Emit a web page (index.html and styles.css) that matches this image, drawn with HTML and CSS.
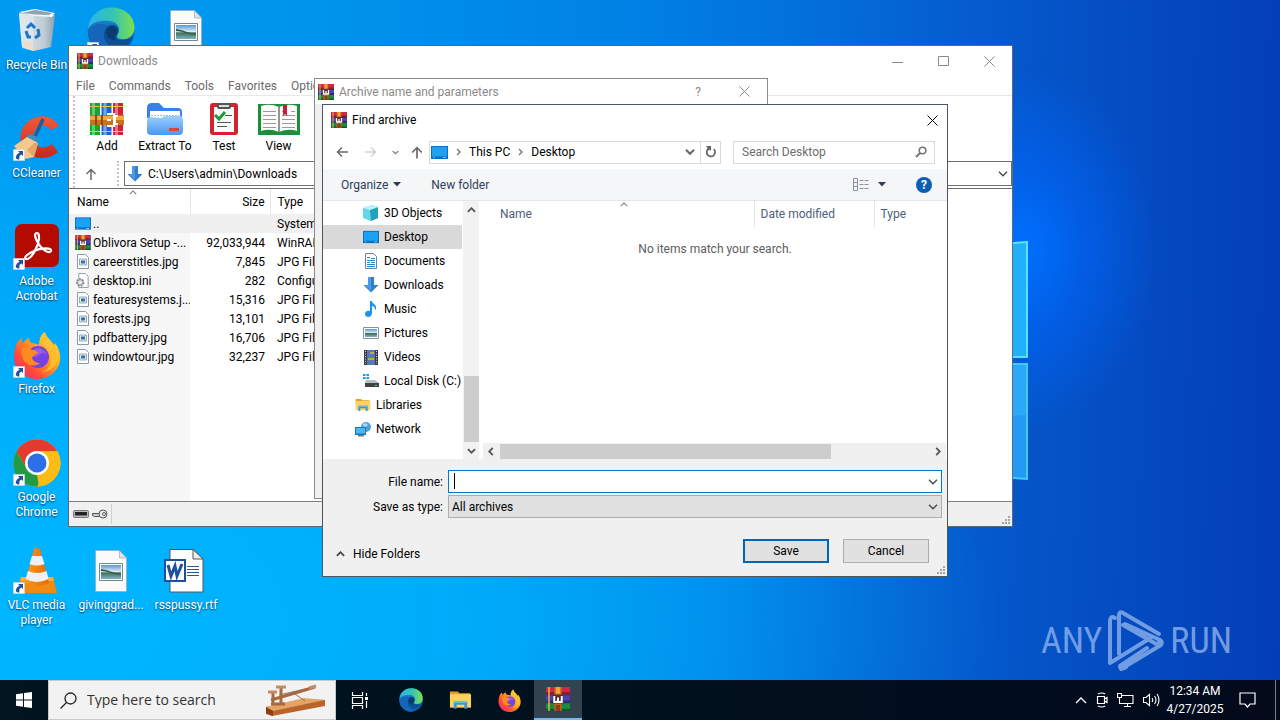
FILE: index.html
```html
<!DOCTYPE html>
<html lang="en">
<head>
<meta charset="utf-8">
<title>Desktop</title>
<link rel="stylesheet" href="styles.css">
</head>
<body>
<svg class="sprite" aria-hidden="true">
  <defs>
    <linearGradient id="g-edge" x1="0" y1="0" x2="1" y2="0"><stop offset="0" stop-color="#2bb4ee"/><stop offset=".55" stop-color="#35c5b0"/><stop offset="1" stop-color="#7ee04c"/></linearGradient>
    <linearGradient id="g-edge2" x1="0" y1="0" x2="0" y2="1"><stop offset="0" stop-color="#1b8edb"/><stop offset="1" stop-color="#0f57a8"/></linearGradient>
    <linearGradient id="g-fox" x1="1" y1="0" x2="0" y2="1"><stop offset="0" stop-color="#ffe940"/><stop offset=".4" stop-color="#ffa420"/><stop offset=".7" stop-color="#ff4b3a"/><stop offset="1" stop-color="#e4237f"/></linearGradient>
    <linearGradient id="g-folder" x1="0" y1="0" x2="0" y2="1"><stop offset="0" stop-color="#9ccfff"/><stop offset="1" stop-color="#4a96f0"/></linearGradient>
    <linearGradient id="g-cone" x1="0" y1="0" x2="1" y2="0"><stop offset="0" stop-color="#ff9a1e"/><stop offset="1" stop-color="#e56a00"/></linearGradient>
    <linearGradient id="g-bin" x1="0" y1="0" x2="1" y2="0"><stop offset="0" stop-color="#dde5eb"/><stop offset=".7" stop-color="#bfccd6"/><stop offset="1" stop-color="#8b9fae"/></linearGradient>
    <linearGradient id="g-cc" x1="0" y1="0" x2="0" y2="1"><stop offset="0" stop-color="#ef5a3c"/><stop offset="1" stop-color="#c9271c"/></linearGradient>
    <linearGradient id="g-photo" x1="0" y1="0" x2="0" y2="1"><stop offset="0" stop-color="#5c97d6"/><stop offset=".5" stop-color="#e3eff6"/><stop offset=".55" stop-color="#3f6f58"/><stop offset="1" stop-color="#7fb3c4"/></linearGradient>

    <symbol id="rar" viewBox="0 0 16 16">
      <path fill="#2a2438" d="M0 0h16v16H0z"/>
      <path fill="#cc2a48" d="M0 0h16v5H0z"/><path fill="#4a43b4" d="M0 5.500h16v4.700H0z"/><path fill="#168c40" d="M0 10.800h16V16H0z"/>
      <path fill="#8c1830" d="M0 3.500h16V5H0z"/><path fill="#302a80" d="M0 9h16v1.200H0z"/><path fill="#0c5c28" d="M0 14.500h16V16H0z"/>
      <path fill="#e9b34a" d="M1.500 0h1v16h-1z"/>
      <path fill="#c2621f" d="M5.500 0h5v16h-5z"/><path fill="#f1a33a" d="M6.500 0h3v4.500h-3z"/>
      <path fill="#8d3c18" d="M6.500 12h3v4h-3z"/><path fill="#5d3030" d="M4.500 5h7v6h-7z"/>
      <path fill="none" stroke="#fff" stroke-width="1.300" d="M5.500 6v4h5V6M8 7v3"/>
    </symbol>
    <symbol id="shot" viewBox="0 0 12 12"><path fill="#fff" stroke="#b9c4cc" stroke-width=".6" d="M.3.3h11.400v11.400H.3z"/><path fill="#24519b" d="M5 2h5v5L8.400 5.600C6.600 6.500 6 8 6.400 10.200 4.500 10.800 3 10 2.700 8.600 3 6 4.500 4.500 6.600 3.700z"/></symbol>
    <symbol id="edge" viewBox="0 0 48 48">
      <circle cx="24" cy="24" r="23.500" fill="url(#g-edge2)"/>
      <path fill="url(#g-edge)" d="M1 22C2 9 12 .5 25 .5 38 .5 48 10 47.500 21c-.3 8-7 12-13.500 11-4-.6-5-2.500-3-5 3-5 0-12-8-13C13 13 4 15 1 22z"/>
      <path fill="#0c4f93" d="M17 25c2-7 8-9 12-6 3 2 3 6 1 9-2 3 0 5 5 5 5 0 8-1 11-3-3 9-13 14-21 10-6-3-9-9-8-15z"/>
      <path fill="#1565b8" d="M17 25c-2 10 4 18 14 20-4 2-10 3-15 1C7 42 2 34 1 25c3-8 15-10 20-6-2 1-3 3-4 6z"/>
      <path fill="#093b70" d="M19 24c2-5 6-6 9-4 3 2 3 5 1 8-2 3-1 5 1 6-6-1-11-4-11-10z"/>
    </symbol>
    <symbol id="fox" viewBox="0 0 48 48">
      <path fill="url(#g-fox)" d="M4 12c1-2 3-4 5-5-1 3 0 4 1 5 2-3 4-4 6-5 0 3 1 4 3 5 2 0 5 1 7 2C26 8 28 4 32 1c2 7 7 9 9 14l1-3c4 5 6 12 5 18-2 11-12 18-23 18C11 48 1 38 1 26c0-5 1-10 3-14z"/>
      <path fill="#ffc22c" d="M31 1c-4 4-5 8-2 12 6 5 11 9 9 18-1 5-5 9-10 10 9 0 16-6 17-14 1-8-3-12-6-16-3-4-6-5-8-10z" opacity=".8"/>
      <circle cx="25" cy="26" r="11" fill="#7543e3"/><path fill="#9d59ea" d="M18 20c5-5 13-3 16 3-4-2-6-1-8 1-3 3-7 2-9 0z"/>
      <path fill="#ff8a1d" d="M9 17c4-1 8 0 10 2 3 0 5 1 6 3-3 2-5 2-6 5 1 3 4 5 8 5-6 5-14 2-17-4-1-4-2-7-1-11z"/>
    </symbol>
    <symbol id="arrowdown" viewBox="0 0 16 16"><path fill="#2f7fd0" d="M5 0h6v8h4.500L8 15.500.5 8H5z"/><path fill="#4b9be6" d="M5 0h3v14L1.500 8H5z"/></symbol>
    <symbol id="monitor" viewBox="0 0 17 13"><path fill="#0b6fbf" d="M0 0h17v13H0z"/><path fill="#1ba1f6" d="M1 1h15v9.500H1z"/><path fill="#9fd8ff" d="M2 11.300h1.500v.8H2zM12 11.300h3v.8h-3z"/></symbol>
    <symbol id="jpg" viewBox="0 0 12 15"><path fill="#fff" stroke="#8b9aa8" d="M.5.5h8l3 3v11H.5z"/><path fill="#dfeaf3" stroke="#7d97b2" stroke-width=".8" d="M2.500 5h7v6h-7z"/><path fill="#3c6d9c" d="M4 6.500h4v3H4z"/></symbol>
    <symbol id="photo" viewBox="0 0 32 42"><path fill="#fbfbfb" stroke="#9aa7b0" stroke-width=".7" d="M.5.500h24l7 7.500v33.500H.5z"/><path fill="#dce4ea" stroke="#9aa7b0" stroke-width=".7" d="M24.500.5V8h7z"/><path fill="#fff" stroke="#73879b" d="M4.500 13.500h23v17h-23z"/><path fill="url(#g-photo)" d="M6 15h20v14H6z"/><path fill="#2f5c44" d="M6 21c6 0 10 3 20 4v-1c-8-1-13-4-20-5z"/></symbol>
    <symbol id="explorer" viewBox="0 0 24 20"><path fill="#e8a020" d="M1 1h8l2 2h11v5H1z"/><path fill="#fbd364" d="M1 4h22v14H1z"/><path fill="#3f94d4" d="M5 11h14v8h-3v-4H8v4H5z"/><path fill="#72b8e8" d="M5 11h14v2H5z"/></symbol>
    <symbol id="x" viewBox="0 0 11 11"><path fill="none" stroke="currentColor" d="M.5.500l10 10M10.500.5l-10 10"/></symbol>
    <symbol id="chev" viewBox="0 0 10 6"><path fill="none" stroke="currentColor" stroke-width="1.300" d="M1 .8l4 4 4-4"/></symbol>
    <symbol id="chevb" viewBox="0 0 10 6"><path fill="none" stroke="currentColor" stroke-width="2" d="M1 .8l4 4 4-4"/></symbol>
    <symbol id="grip" viewBox="0 0 8 8"><path fill="#a5a5a5" d="M6 0h2v2H6zM3 3h2v2H3zM6 3h2v2H6zM0 6h2v2H0zM3 6h2v2H3zM6 6h2v2H6z"/></symbol>
  </defs>
</svg>

<main class="desktop">
  <svg class="wall" viewBox="0 0 60 240" aria-hidden="true">
    <path fill="#22b0f8" stroke="#55e4ff" stroke-width="2" d="M0 5l57-4v115H0z"/>
    <path fill="#2399f8" stroke="#3fcbff" stroke-width="2" d="M0 123h57v115l-57-4z"/>
    <path fill="#35b8fb" opacity=".5" d="M0 124h56v50l-56 4z"/>
  </svg>

  <div class="icons">
    <a class="shortcut" href="#"><svg class="pic" viewBox="0 0 48 48"><path fill="url(#g-bin)" d="M6 6l36 2-4 32-17 4-12-4z"/><path fill="#f4f7f9" d="M6 5l16-3 20 4-3 4-18-1z"/><path fill="#8fa2b0" d="M9 6l13-3 17 3-3 2-14-.5z"/><path fill="#e3eaef" opacity=".7" d="M21 9l-1 35-11-3L6 7z"/><path fill="#f3d9c0" opacity=".7" d="M10 33l10 3v8l-9-4z"/><path fill="none" stroke="#1a76c9" stroke-width="3" d="M14 21l4-4 4 4M13 24l2 6h3M25 22l1 6-4 3"/></svg><span>Recycle Bin</span></a>
    <a class="shortcut" href="#"><svg class="pic" viewBox="0 0 48 48"><path fill="url(#g-cc)" d="M46 11C40 1 28-1 19 4 7 10 4 25 12 36c8 9 24 9 33 1l-6-8c-5 4-11 5-15 1-5-5-5-13 0-17 4-4 10-3 14 2z"/><path stroke="#1d5d99" stroke-width="3.500" d="M30 4L21 24"/><path fill="#3d8ec9" d="M16 19l9 3-2 9-13-5z"/><path fill="#f3c98e" d="M1 31l13-9 11 6-4 14-9 2z"/><path fill="#e0a765" d="M14 35l7-7 4 0-4 14z"/><use href="#shot" y="34" width="12" height="12"/></svg><span>CCleaner</span></a>
    <a class="shortcut" href="#"><svg class="pic" viewBox="0 0 48 48"><rect x="2" y="1" width="44" height="43" rx="7" fill="#b30b00"/><path fill="none" stroke="#fff" stroke-width="2.200" d="M24 10c-4 0-1 8 3 13 4 5 10 8 11 5 1-4-11-3-17 0-7 3-11 7-8 8 5 1 12-12 13-20 0-4 0-6-2-6z"/><use href="#shot" y="35" width="12" height="12"/></svg><span>Adobe Acrobat</span></a>
    <a class="shortcut" href="#"><svg class="pic" viewBox="0 0 48 48"><use href="#fox"/><use href="#shot" y="35" width="12" height="12"/></svg><span>Firefox</span></a>
    <a class="shortcut" href="#"><svg class="pic" viewBox="0 0 48 48"><circle cx="24" cy="24" r="23.500" fill="#fbbc15"/><path fill="#e53a2e" d="M3.600 12.200A23.500 23.500 0 0144.400 12.300H24L13.800 30z"/><path fill="#259a45" d="M3.600 12.200L14 30l10 6 2 11.500A23.500 23.500 0 013.600 12.200z"/><path fill="#fbbc15" d="M24 12.200h20.400A23.500 23.500 0 0124 47.500L34.200 30z"/><circle cx="24" cy="24" r="12" fill="#fff"/><circle cx="24" cy="24" r="9.500" fill="#2d6fe6"/><use href="#shot" y="35" width="12" height="12"/></svg><span>Google Chrome</span></a>
    <a class="shortcut" href="#"><svg class="pic" viewBox="0 0 48 48"><path fill="#f08a12" d="M8 30h32l4 16H4z"/><path fill="#ffab3d" d="M8 30h32l1 4H7z"/><path fill="url(#g-cone)" d="M21 2q3-2 6 0l9 34q-12 6-24 0z"/><path fill="#eef0f2" d="M19 9h10l2.500 8q-7 3-15 0zM15 24q9 4 18.500 0l2 8q-12 6-23 0z"/><use href="#shot" y="35" width="12" height="12"/></svg><span>VLC media player</span></a>
    <a class="shortcut top2" href="#" aria-label="Edge"><svg class="pic" viewBox="0 0 48 48"><use href="#edge"/><use href="#shot" y="35" width="12" height="12"/></svg></a>
    <a class="shortcut bottom2" href="#"><svg class="pic" viewBox="0 0 48 48"><use href="#photo" x="8" y="3" width="32" height="42"/></svg><span>givinggrad...</span></a>
    <a class="shortcut top3" href="#" aria-label="Picture"><svg class="pic" viewBox="0 0 48 48"><use href="#photo" x="8" y="3" width="32" height="42"/></svg></a>
    <a class="shortcut bottom3" href="#"><svg class="pic" viewBox="0 0 48 48"><path fill="#fff" stroke="#555" d="M8 2.500h23L41 12v33H8z"/><path fill="#eee" stroke="#555" d="M31 2.500V12h10z"/><path stroke="#2b579a" d="M25 19.500h12M25 22.500h12M25 25.500h12M25 28.500h12"/><path fill="#fff" stroke="#1f4f9e" stroke-width="2" d="M3 13h20v21H3z"/><path fill="none" stroke="#1f4f9e" stroke-width="3" d="M6 18l3 11 4-10 2 10 5-12"/></svg><span>rsspussy.rtf</span></a>
  </div>

  <section class="win main-win">
    <header class="titlebar dim"><svg class="app"><use href="#rar"/></svg><h1>Downloads</h1>
      <div class="caption">
        <button aria-label="Minimize"><svg width="11" height="11"><path stroke="currentColor" d="M0 6.500h11"/></svg></button>
        <button aria-label="Maximize"><svg width="11" height="11"><path fill="none" stroke="currentColor" d="M.5.5h10v9H.5z"/></svg></button>
        <button aria-label="Close"><svg width="11" height="11"><use href="#x"/></svg></button>
      </div>
    </header>
    <nav class="menu"><button>File</button><button>Commands</button><button>Tools</button><button>Favorites</button><button>Options</button></nav>
    <div class="tools">
      <button class="t-add"><svg width="34" height="34" viewBox="0 0 34 34"><path fill="#19a335" d="M0 1h10v32H0z"/><path fill="#5bd070" d="M2 1h3v32H2z"/><path fill="#2462c9" d="M11.500 1h10v32h-10z"/><path fill="#6ea6f4" d="M13.500 1h3v32h-3z"/><path fill="#d21f3d" d="M23 1h10v32H23z"/><path fill="#f4708a" d="M25 1h3v32h-3z"/><path fill="#ecc53c" d="M0 4h10v1H0zM11.500 4h10v1h-10zM23 4h10v1H23zM0 29h10v1H0zM11.500 29h10v1h-10zM23 29h10v1H23z"/><path fill="#c7731c" d="M0 13h34v10H0z"/><path fill="#f0a93b" d="M0 14h34v4H0z"/><path fill="#8d4a14" d="M5 13h2v10H5zM11 13h2v10h-2z"/><path fill="none" stroke="#fff" stroke-width="2" d="M17 12h7v12h-7M17 18h4M28 14h-3v8h3"/></svg>Add</button>
      <button class="t-ext"><svg width="36" height="34" viewBox="0 0 36 34"><path fill="#3a7fea" d="M0 6q0-5 5-5h7l5 5h14q4 0 4 4v6H0z"/><path fill="#fff" d="M3 9h30v12H3z"/><path stroke="#a9b8c8" stroke-dasharray="2 1" d="M4 13.500h28"/><path fill="url(#g-folder)" d="M0 19q0-4 4-4l10 1 4-2h14q4 0 4 4v11q0 4-4 4H4q-4 0-4-4z"/><path fill="#e2452f" d="M22 26h10v3H22z"/></svg>Extract To</button>
      <button class="t-test"><svg width="28" height="34" viewBox="0 0 28 34"><rect y="1" width="28" height="32" rx="3" fill="#d2232f"/><path fill="#fafafa" d="M4 5h20v25H4z"/><rect x="7" y="1" width="14" height="6" rx="2" fill="#555"/><path fill="#ddd" d="M9 3h10v2H9z"/><path stroke="#555" d="M15 13.500h7M7 20.500h14M7 24.500h10"/><path fill="none" stroke="#1c9a3d" stroke-width="3" d="M5 13l4 4 6-7"/></svg>Test</button>
      <button class="t-view"><svg width="42" height="34" viewBox="0 0 42 34"><path fill="#1b8f3a" d="M0 2h42v31H0z"/><path fill="#fbfbfb" d="M3 4q9-3 18 1 9-4 18-1v25q-9-3-18 1-9-4-18-1z"/><path stroke="#333" d="M21 5v25"/><path stroke="#9a9a9a" d="M5 9.500h13M5 13.500h13M5 17.500h13M5 21.500h13M24 13.500h13M24 17.500h13M24 21.500h13M24 9.500h4M33 9.500h4M5 25.500h13M24 25.500h13"/><path fill="#c51f35" d="M25 3h4v11l-2-2-2 2z"/></svg>View</button>
    </div>
    <div class="address">
      <button class="up" aria-label="Up"><svg width="12" height="12" viewBox="0 0 12 12"><path fill="none" stroke="#6a6a6a" stroke-width="1.500" d="M6 12V2M1.500 6L6 1.500 10.500 6"/></svg></button>
      <div class="path"><svg width="16" height="16"><use href="#arrowdown"/></svg><input type="text" aria-label="Path" value="C:\Users\admin\Downloads"><svg class="c" width="10" height="6"><use href="#chev"/></svg></div>
    </div>
    <div class="list">
      <table class="files">
        <thead><tr><th class="n">Name<svg class="sort" width="8" height="5" viewBox="0 0 10 6"><path fill="none" stroke="#777" stroke-width="1.300" d="M1 5l4-4 4 4"/></svg></th><th class="s">Size</th><th class="t">Type</th></tr></thead>
        <tbody>
          <tr class="sel"><td class="n"><svg class="fi"><use href="#monitor"/></svg>..</td><td class="s"></td><td class="t">System Folder</td></tr>
          <tr><td class="n"><svg class="fi"><use href="#rar"/></svg>Oblivora Setup -...</td><td class="s">92,033,944</td><td class="t">WinRAR archive</td></tr>
          <tr><td class="n"><svg class="fi"><use href="#jpg"/></svg>careerstitles.jpg</td><td class="s">7,845</td><td class="t">JPG File</td></tr>
          <tr><td class="n"><svg class="fi" viewBox="0 0 16 16"><path fill="#fff" stroke="#8b9aa8" d="M3.500.5h7l3 3v12h-10z"/><circle cx="5" cy="10" r="3.500" fill="#ccc" stroke="#888" stroke-width="2" stroke-dasharray="2 1"/><circle cx="5" cy="10" r="1.300" fill="#fff"/></svg>desktop.ini</td><td class="s">282</td><td class="t">Configuration</td></tr>
          <tr><td class="n"><svg class="fi"><use href="#jpg"/></svg>featuresystems.j...</td><td class="s">15,316</td><td class="t">JPG File</td></tr>
          <tr><td class="n"><svg class="fi"><use href="#jpg"/></svg>forests.jpg</td><td class="s">13,101</td><td class="t">JPG File</td></tr>
          <tr><td class="n"><svg class="fi"><use href="#jpg"/></svg>pdfbattery.jpg</td><td class="s">16,706</td><td class="t">JPG File</td></tr>
          <tr><td class="n"><svg class="fi"><use href="#jpg"/></svg>windowtour.jpg</td><td class="s">32,237</td><td class="t">JPG File</td></tr>
        </tbody>
      </table>
    </div>
    <footer class="status"><svg width="36" height="12" viewBox="0 0 36 12"><rect x=".5" y="2.500" width="15" height="7" rx="1" fill="#bbb" stroke="#777"/><path fill="#222" d="M2 4h12v3.500H2z"/><path fill="#ccc" stroke="#555" d="M19.500 5.500h7v3h-5l-2-1z"/><circle cx="30" cy="6" r="4" fill="#eee" stroke="#555"/><circle cx="31" cy="6" r="1.500" fill="#fff" stroke="#555"/></svg><i class="sep"></i><svg class="grip"><use href="#grip"/></svg></footer>
  </section>

  <section class="win params">
    <header class="titlebar dim"><svg class="app"><use href="#rar"/></svg><h1>Archive name and parameters</h1>
      <div class="caption"><button aria-label="Help">?</button><button aria-label="Close"><svg width="11" height="11"><use href="#x"/></svg></button></div>
    </header>
  </section>

  <section class="win find">
    <header class="titlebar"><svg class="app"><use href="#rar"/></svg><h1>Find archive</h1>
      <div class="caption"><button aria-label="Close"><svg width="11" height="11"><use href="#x"/></svg></button></div>
    </header>
    <div class="nav">
      <button class="b1" aria-label="Back"><svg width="12" height="12" viewBox="0 0 12 12"><path fill="none" stroke="#6a6a6a" stroke-width="1.500" d="M12 6H1.500M6 1.500L1.500 6 6 10.500"/></svg></button>
      <button class="b1" aria-label="Forward"><svg width="12" height="12" viewBox="0 0 12 12"><path fill="none" stroke="#d2d2d2" stroke-width="1.500" d="M0 6h10.500M6 1.500L10.500 6 6 10.500"/></svg></button>
      <button class="b2" aria-label="Recent"><svg width="7" height="5" viewBox="0 0 10 6"><use href="#chevb"/></svg></button>
      <button class="b2" aria-label="Up"><svg width="12" height="13" viewBox="0 0 12 12"><path fill="none" stroke="#6a6a6a" stroke-width="1.700" d="M6 12V2M1.200 6L6 1.200 10.800 6"/></svg></button>
      <div class="crumbs"><svg width="17" height="13"><use href="#monitor"/></svg><svg class="r" width="5" height="8" viewBox="0 0 5 8"><path fill="none" stroke="#777" stroke-width="1.400" d="M1 1l3 3-3 3"/></svg><button>This PC</button><svg class="r" width="5" height="8" viewBox="0 0 5 8"><path fill="none" stroke="#777" stroke-width="1.400" d="M1 1l3 3-3 3"/></svg><button>Desktop</button>
        <button class="drop" aria-label="Previous locations"><svg width="10" height="6"><use href="#chevb"/></svg></button>
        <button class="refresh" aria-label="Refresh"><svg width="12" height="12" viewBox="0 0 12 12"><path fill="none" stroke="#666" stroke-width="1.700" d="M3.500 2.800A4.200 4.200 0 108.800 3.200"/><path fill="#666" d="M1 0h5v5L4.600 3.700 2.500 5V2z"/></svg></button></div>
      <div class="search"><input type="text" aria-label="Search Desktop" placeholder="Search Desktop"><svg width="12" height="12" viewBox="0 0 12 12"><circle cx="7.500" cy="4.500" r="3.300" fill="none" stroke="#777" stroke-width="1.600"/><path stroke="#777" stroke-width="2" d="M5 7L1 11"/></svg></div>
    </div>
    <div class="bar"><button>Organize<svg width="8" height="5"><path fill="currentColor" d="M0 0h8L4 4.500z"/></svg></button><button>New folder</button>
      <button class="views" aria-label="Views"><svg width="16" height="13" viewBox="0 0 16 13"><path fill="none" stroke="#8592a3" d="M.5.5h4v12h-4zM.5 4.500h4M.5 8.500h4M6.500 2.500h4M11.500 2.500h4M6.500 6.500h4M11.500 6.500h4M6.500 10.500h4M11.500 10.500h4"/></svg><svg width="8" height="5"><path fill="currentColor" d="M0 0h8L4 4.500z"/></svg></button>
      <button class="help" aria-label="Help">?</button></div>
    <div class="panes">
      <ul class="tree">
        <li><svg viewBox="0 0 16 16"><path fill="#63d6e8" d="M0 3l9-3 6 2v11l-7 3-8-3z"/><path fill="#22a2bd" d="M7 5l8-3v11l-7 3z"/><path fill="#baf3f7" d="M0 3l9-3 6 2-8 3z"/></svg>3D Objects</li>
        <li class="on"><svg><use href="#monitor"/></svg>Desktop</li>
        <li><svg viewBox="0 0 16 16"><path fill="#fff" stroke="#77828d" d="M2.500.5h8l3 3v12h-11z"/><path stroke="#2b86c8" d="M4 4.500h3M8 5.500h4M4 7.500h8M4 9.500h3M8 9.500h4M4 11.500h8M4 13.500h8"/></svg>Documents</li>
        <li><svg><use href="#arrowdown"/></svg>Downloads</li>
        <li><svg viewBox="0 0 16 16"><path fill="#1d94e6" d="M7 0h2c0 3 5 3 4 8l-1 1c0-3-1-3.500-3-4v7c0 5-7 5-7 1 0-3 3-4 5-3z"/></svg>Music</li>
        <li><svg viewBox="0 0 16 16"><path fill="#fff" stroke="#8593a0" d="M.5 2.500h15v11H.5z"/><path fill="url(#g-photo)" d="M2 4h12v8H2z"/></svg>Pictures</li>
        <li><svg viewBox="0 0 16 16"><path fill="#3b3b3b" d="M1 1h14v15H1z"/><path fill="#5479b8" d="M4 1h8v15H4z"/><path fill="#c7a93c" d="M5 9h6v2H5zM7 3h4v2H7z"/><path stroke="#ddd" stroke-dasharray="1 1.500" d="M2.500 2v13M13.500 2v13"/></svg>Videos</li>
        <li><svg viewBox="0 0 16 16"><path fill="#13a0e0" d="M0 1h2.500v2H0zM3.500 1H6v2H3.500zM0 4h2.500v2H0zM3.500 4H6v2H3.500z"/><path fill="#b9bec2" d="M3 7h9l4 3H2z"/><path fill="#3d4347" d="M2 10h14v4H2z"/><path fill="#4ee06a" d="M12 12h2v1h-2z"/></svg>Local Disk (C:)</li>
        <li class="root"><svg viewBox="0 0 24 20"><use href="#explorer"/></svg>Libraries</li>
        <li class="root"><svg viewBox="0 0 16 16"><circle cx="11" cy="6" r="5" fill="#4f9fd6"/><path fill="#a8d9f5" d="M8 3q3-2 5 1-2 3-5 1z"/><path fill="#1679be" d="M0 6h11v8H0z"/><path fill="#4cb7f2" d="M1 7h9v5.500H1z"/><path fill="#777" d="M3 14h6v1.500H3z"/></svg>Network</li>
      </ul>
      <div class="vscroll"><svg width="9" height="6" viewBox="0 0 10 6"><path fill="none" stroke="#555" stroke-width="2" d="M1 5l4-4 4 4"/></svg><i></i><svg width="9" height="6"><use href="#chevb"/></svg></div>
      <div class="content">
        <table class="results"><thead><tr><th class="c1">Name<svg class="sort" width="8" height="5" viewBox="0 0 10 6"><path fill="none" stroke="#777" stroke-width="1.300" d="M1 5l4-4 4 4"/></svg></th><th class="c2">Date modified</th><th>Type</th></tr></thead></table>
        <p>No items match your search.</p>
        <div class="hscroll"><svg width="6" height="9" viewBox="0 0 6 10"><path fill="none" stroke="#555" stroke-width="2" d="M5 1L1 5l4 4"/></svg><i></i><svg width="6" height="9" viewBox="0 0 6 10"><path fill="none" stroke="#555" stroke-width="2" d="M1 1l4 4-4 4"/></svg></div>
      </div>
    </div>
    <form class="save">
      <label for="fname">File name:</label><div class="field"><input id="fname" type="text"><i class="cursor"></i><svg class="c" width="10" height="6"><use href="#chev"/></svg></div>
      <label for="ftype">Save as type:</label><div class="field"><select id="ftype"><option>All archives</option></select><svg class="c" width="10" height="6"><use href="#chev"/></svg></div>
    </form>
    <div class="actions"><button class="hide"><svg width="9" height="6" viewBox="0 0 10 6"><path fill="none" stroke="#444" stroke-width="2" d="M1 5l4-4 4 4"/></svg>Hide Folders</button><button class="btn primary">Save</button><button class="btn">Cancel</button></div>
    <svg class="grip"><use href="#grip"/></svg>
  </section>

  <div class="mark"><span>ANY</span><svg width="58" height="62" viewBox="0 0 58 62"><path fill="none" stroke="currentColor" stroke-width="4" stroke-linejoin="round" stroke-linecap="round" d="M8 8Q3 5 3 12v41l42-26M12 44V5q0-4 4-2l36 21M12 16v-8M16 15l35 20q4-4-2-7M19 57q-6 4-6-1L40 38M14 59l40-24q2-3-1-5L18 14"/></svg><span>RUN</span></div>
</main>

<footer class="taskbar">
  <button class="start" aria-label="Start"><svg width="16" height="16" viewBox="0 0 16 16"><path fill="#fff" d="M0 2.200l7-1v6.300H0zM8 1l8-1v7.500H8zM0 8.500h7v6.300l-7-1zM8 8.500h8V16l-8-1z"/></svg></button>
  <div class="find-box"><svg width="17" height="17" viewBox="0 0 17 17"><circle cx="10.500" cy="6.500" r="5.500" fill="none" stroke="#222" stroke-width="1.300"/><path stroke="#222" stroke-width="1.300" d="M6.500 10.500L.5 16.500"/></svg><input type="text" aria-label="Search" placeholder="Type here to search"><svg width="62" height="34" viewBox="0 0 62 34"><path fill="#b9642a" d="M1 24l38-8 21 1v6L7 33l-6-2z"/><path fill="#e3a465" d="M1 24l38-9 21 2L8 28z"/><path fill="#8a3f16" d="M1 24l7 4v5l-7-3z"/><path fill="none" stroke="#a8673f" stroke-width="3" d="M8 22V9M16 20V5M6 17l24-7 20-6M6 21h14"/><path stroke="#c58a62" stroke-width="3" d="M3 9h9M11 4h10M44 5l7-2"/><path stroke="#9b7050" d="M30 11l10 7M14 12l26-6"/></svg></div>
  <button class="task view" aria-label="Task view"><svg width="17" height="17" viewBox="0 0 17 17"><path fill="none" stroke="#fff" stroke-width="1.200" d="M1.500 0v3.500h10V0M1.500 17v-3.500h10V17M1.500 5.500h10v6h-10zM15.500 1v3M15.500 9v7"/><path fill="#fff" d="M14 5h3v3h-3z"/></svg></button>
  <button class="task" aria-label="Edge"><svg width="24" height="24"><use href="#edge"/></svg></button>
  <button class="task" aria-label="File Explorer"><svg width="23" height="20"><use href="#explorer"/></svg></button>
  <button class="task" aria-label="Firefox"><svg width="23" height="23"><use href="#fox"/></svg></button>
  <button class="task active" aria-label="WinRAR"><svg width="24" height="24"><use href="#rar"/></svg></button>
  <div class="tray">
    <svg width="12" height="8" viewBox="0 0 12 8"><path fill="none" stroke="#fff" stroke-width="1.300" d="M1 7l5-5 5 5"/></svg>
    <svg width="12" height="16" viewBox="0 0 12 16"><path fill="none" stroke="#fff" stroke-width="1.200" d="M1.500 4.500h7v7h-7zM8.500 7l2.500-1.500v5L8.500 9M2 2q4-2 7 0M2 14q4 2 7 0"/></svg>
    <svg width="17" height="14" viewBox="0 0 17 14"><path fill="none" stroke="#fff" stroke-width="1.100" d="M5 2.500h11v8H5M.5.500h4v4h-4zM2.500 4.500v6h3M10.500 10.500v3M7 13.500h7"/></svg>
    <svg width="17" height="14" viewBox="0 0 17 14"><path fill="none" stroke="#fff" stroke-width="1.100" d="M.5 4.500h2.500L6.500 1.500v11L3 9.500H.5zM9 5q1.500 2 0 4M11.500 3q3 4 0 8M14 1q4 6 0 12"/></svg>
  </div>
  <time class="clock">12:34 AM<br>4/27/2025</time>
  <button class="note" aria-label="Notifications"><svg width="17" height="16" viewBox="0 0 17 16"><path fill="none" stroke="#fff" stroke-width="1.200" d="M1 1h15v11h-5l-2.500 3L6 12H1z"/></svg></button>
  <button class="peek" aria-label="Show desktop"></button>
</footer>
</body>
</html>
```
FILE: styles.css
```css
* { box-sizing: border-box; }
body {
  margin: 0;
  min-height: 100vh;
  display: flex;
  flex-direction: column;
  font: 12px/16px Roboto, "Noto Sans", sans-serif;
  color: #000;
  overflow: hidden;
}
button, input, select { font: inherit; color: inherit; border: 0; background: none; padding: 0; margin: 0; outline: 0; }
button { display: flex; align-items: center; justify-content: center; }
svg { flex: none; display: block; }
.sprite { position: absolute; width: 0; height: 0; }

.desktop {
  position: relative;
  flex: 1;
  overflow: hidden;
  background:
    radial-gradient(ellipse 140px 180px at 1020px 250px, #0070ff 0, #0068ff88 45%, #0068ff00 100%),
    linear-gradient(100deg, #00b8ff00 60%, #0034a844 100%),
    radial-gradient(ellipse 1000px 500px at 0 620px, #00b6ff 0, #00b4ffcc 45%, #00b4ff00 100%),
    linear-gradient(90deg, #009cf2 0, #0094ec 25%, #0080e4 50%, #0560d2 75%, #0542bc 100%);
}
.wall { position: absolute; left: 970px; top: 241px; width: 60px; height: 240px; }

.icons {
  display: grid;
  grid-template-columns: 73px 76px 74px;
  grid-template-rows: repeat(6, 108px);
  padding-top: 7px;
}
.shortcut {
  grid-column: 1;
  display: flex;
  flex-direction: column;
  align-items: center;
  gap: 3px;
  color: #fff;
  text-align: center;
  text-decoration: none;
  line-height: 15px;
  text-shadow: 0 1px 2px #00305a;
}
.shortcut span { max-width: 70px; }
.pic { width: 48px; height: 48px; }
.top2 { grid-area: 1 / 2; }
.top3 { grid-area: 1 / 3; }
.bottom2 { grid-area: 6 / 2; }
.bottom3 { grid-area: 6 / 3; }

.win { position: absolute; display: flex; flex-direction: column; background: #fff; border: 1px solid #5d6a75; }
.titlebar { display: flex; align-items: center; height: 30px; padding-left: 8px; gap: 5px; }
.titlebar h1 { font-size: 12px; font-weight: 400; margin: 0; flex: 1; }
.dim { color: #8a8a8a; }
.app { width: 16px; height: 16px; }
.caption { display: flex; }
.caption button { width: 46px; height: 28px; }

.main-win { left: 68px; top: 45px; width: 945px; height: 482px; }
.menu { display: flex; align-items: center; gap: 14px; height: 20px; padding-left: 7px; color: #6a6a6a; border-bottom: 1px solid #e8e8e8; }
.tools { display: flex; margin-left: 4px; padding: 6px 0 0 8px; height: 62px; border-left: 2px dotted #c4c4c4; }
.tools button { flex-direction: column; justify-content: flex-start; gap: 2px; }
.t-add { width: 48px; }
.t-ext { width: 68px; }
.t-test { width: 50px; }
.t-view { width: 59px; }
.address { display: flex; height: 30px; margin-left: 4px; border-left: 2px dotted #c4c4c4; padding: 3px 0 2px; }
.up { width: 44px; border-right: 2px dotted #c4c4c4; padding-right: 10px; margin-right: 5px; }
.path { flex: 1; display: flex; align-items: center; border: 1px solid #6e6e6e; padding: 0 3px 0 2px; gap: 5px; }
.path input { flex: 1; }
.c { color: #444; }
.list { flex: 1; border-top: 1px solid #6e6e6e; border-bottom: 1px solid #7e7e7e; background: linear-gradient(#fff 0 25px, #f7f7f7 25px) 0 0 / 121px 100% no-repeat; }
table { border-collapse: collapse; table-layout: fixed; }
th { font-weight: 400; text-align: left; position: relative; padding: 0; }
td { padding: 0; height: 19px; white-space: nowrap; overflow: hidden; }
.files { width: 440px; }
.files th { height: 25px; border-right: 1px solid #e5e5e5; }
.files .n { width: 121px; padding-left: 8px; }
.files td.n { padding-left: 6px; }
.files .s { width: 80px; text-align: right; padding-right: 5px; }
.files .t { padding-left: 7px; }
.fi { width: 16px; height: 15px; float: left; margin: 0 2px 0 0; }
.sel { background: #f0f0f0; }
.sort { position: absolute; left: 50%; top: 1px; }
.status { display: flex; align-items: center; gap: 2px; height: 24px; padding-left: 4px; background: #f0f0f0; }
.sep { width: 1px; height: 20px; background: #d0d0d0; }
.grip { position: absolute; right: 2px; bottom: 2px; width: 8px; height: 8px; }

.params { left: 314px; top: 78px; width: 454px; height: 421px; background: #f0f0f0; border-color: #8a8a8a; }
.params .titlebar { height: 25px; padding-left: 3px; background: #fff; }

.find { left: 322px; top: 104px; width: 626px; height: 473px; border-color: #4c5660; }
.find .caption button { width: 30px; }
.nav { display: flex; align-items: center; height: 34px; padding: 0 12px 0 4px; }
.b1 { width: 29px; height: 22px; }
.b2 { width: 21px; height: 22px; color: #888; }
.crumbs { flex: 1; display: flex; align-items: center; height: 23px; margin-left: 2px; border: 1px solid #d9d9d9; padding-left: 1px; gap: 8px; }
.crumbs .drop { margin-left: auto; color: #666; }
.crumbs .refresh { width: 20px; height: 21px; margin-left: -3px; border-left: 1px solid #d9d9d9; }
.search { display: flex; align-items: center; width: 202px; height: 23px; margin-left: 12px; border: 1px solid #d9d9d9; padding: 0 7px 0 8px; }
.search input { flex: 1; min-width: 0; }
.search input::placeholder { color: #6d6d6d; opacity: 1; }
.bar { display: flex; align-items: center; height: 32px; background: #f5f6f7; border-bottom: 1px solid #e4e6e8; color: #2a3e5c; padding: 0 15px 0 18px; gap: 30px; }
.bar button { gap: 5px; }
.bar .views { margin-left: auto; gap: 9px; }
.bar .help { width: 16px; height: 16px; border-radius: 50%; background: #0a5fb4; color: #fff; font-weight: 700; line-height: 16px; }
.panes { display: flex; height: 258px; }
.tree { width: 139px; margin: 0; padding: 0; list-style: none; }
.tree li { display: flex; align-items: center; gap: 5px; height: 24px; padding-left: 40px; white-space: nowrap; }
.tree .root { padding-left: 32px; }
.tree .on { background: #d9d9d9; }
.tree svg { width: 16px; height: 16px; }
.vscroll { width: 16px; margin: 0 0 0 1px; background: #f2f2f2; display: flex; flex-direction: column; align-items: center; justify-content: flex-end; padding: 6px 0 5px; color: #555; }
.vscroll svg:first-child { margin-bottom: auto; }
.vscroll i { width: 15px; height: 66px; background: #cdcdcd; margin-bottom: 6px; }
.content { flex: 1; display: flex; flex-direction: column; min-width: 0; }
.results { width: 100%; color: #4c607a; }
.results th { height: 26px; padding-left: 6px; border-left: 1px solid #e5e5e5; }
.results .c1 { width: 275px; padding-left: 21px; border-left: 0; }
.results .c2 { width: 120px; }
.results .sort { left: 141px; }
.content p { margin: 14px 0 0 4px; text-align: center; color: #5d5d5d; }
.hscroll { margin: auto 1px 0 4px; height: 16px; background: #f0f0f0; display: flex; align-items: center; padding: 0 5px; }
.hscroll i { width: 331px; height: 15px; background: #cdcdcd; margin: 0 auto 0 6px; }
.save { display: grid; grid-template-columns: 120px 1fr; column-gap: 5px; row-gap: 2px; align-items: center; background: #f0f0f0; padding: 11px 5px 0 0; }
.save label { text-align: right; }
.field { position: relative; height: 23px; display: flex; }
.field input, .field select { width: 100%; height: 100%; appearance: none; border: 1px solid #adadad; background: #e1e1e1; padding: 0 3px; border-radius: 0; }
.field input { background: #fff; border-color: #0078d7; }
.field .c { position: absolute; right: 4px; top: 9px; }
.cursor { position: absolute; left: 6px; top: 3px; width: 1px; height: 16px; background: #000; }
.actions { flex: 1; display: flex; align-items: flex-start; gap: 14px; background: #f0f0f0; padding: 21px 18px 0 13px; }
.btn { width: 86px; height: 24px; border: 1px solid #adadad; background: #e1e1e1; }
.primary { border: 2px solid #0067b8; }
.hide { margin-right: auto; gap: 8px; height: 29px; }

.mark { position: absolute; right: 48px; bottom: 8px; display: flex; align-items: center; gap: 5px; font: 36px/62px "Roboto Condensed", "Liberation Sans Narrow", sans-serif; color: #83abeb; opacity: .85; }

.taskbar { display: flex; height: 40px; align-items: stretch; background: linear-gradient(90deg, #00151f, #010f1d 60%, #020a1c); color: #fff; }
.start { width: 48px; }
.find-box { width: 288px; display: flex; align-items: center; gap: 10px; background: #f2f2f2; border: 1px solid #c8c8c8; padding: 0 8px 0 11px; color: #222; }
.find-box input { flex: 1; min-width: 0; font-family: "Open Sans", sans-serif; font-size: 14px; }
.find-box input::placeholder { color: #333; opacity: 1; }
.task { width: 48px; margin-right: 1px; }
.view { margin-right: 3px; padding-right: 2px; }
.active { background: #33434f; border-bottom: 2px solid #76b9ed; }
.tray { margin-left: auto; display: flex; align-items: center; gap: 9px; }
.clock { width: 70px; text-align: center; line-height: 18px; padding-top: 2px; }
.note { width: 34px; }
.peek { width: 5px; border-left: 1px solid #7a8288; margin-left: 11px; }
```
